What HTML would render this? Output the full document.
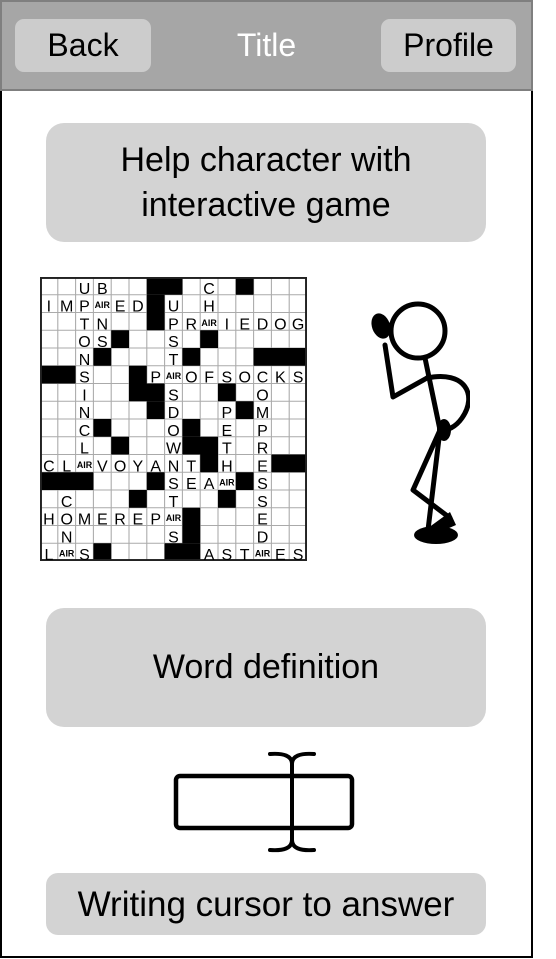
<!DOCTYPE html>
<html><head><meta charset="utf-8"><style>
*{margin:0;padding:0;box-sizing:border-box}
body{width:556px;height:959px;background:#fff;position:relative;overflow:hidden;font-family:"Liberation Sans",sans-serif}
.frame{position:absolute;left:0;top:0;width:533px;height:958px;border:2px solid #000}
.hdr{position:absolute;left:0;top:0;width:533px;height:91px;background:#a6a6a6;border:2px solid #7f7f7f}
.hb{position:absolute;top:19px;height:53px;background:#cccccc;border-radius:9px;font-size:32px;color:#000;display:flex;align-items:center;justify-content:center}
.title{position:absolute;left:200px;width:133px;top:19px;height:53px;color:#fff;font-size:32px;display:flex;align-items:center;justify-content:center}
.box{position:absolute;left:46px;width:440px;background:#d3d3d3;border-radius:18px;display:flex;align-items:center;justify-content:center;text-align:center;font-size:34px;color:#000;line-height:45px}
</style></head><body>
<div class="frame"></div>
<div class="hdr"></div>
<div class="hb" style="left:15px;width:136px">Back</div>
<div class="title">Title</div>
<div class="hb" style="left:381px;width:135px">Profile</div>

<div class="box" style="top:123px;height:119px">Help character with<br>interactive game</div>

<svg style="position:absolute;left:40px;top:277px" width="267" height="284" viewBox="0 0 15 16" preserveAspectRatio="none">
<rect x="0" y="0" width="15" height="16" fill="#fff"/>
<g stroke="#aaa" stroke-width="0.06">
<path d="M1 0V16M2 0V16M3 0V16M4 0V16M5 0V16M6 0V16M7 0V16M8 0V16M9 0V16M10 0V16M11 0V16M12 0V16M13 0V16M14 0V16"/>
<path d="M0 1H15M0 2H15M0 3H15M0 4H15M0 5H15M0 6H15M0 7H15M0 8H15M0 9H15M0 10H15M0 11H15M0 12H15M0 13H15M0 14H15M0 15H15"/>
</g>
<g fill="#000">
<rect x="6" y="0" width="2" height="1"/><rect x="11" y="0" width="1" height="1"/>
<rect x="6" y="1" width="1" height="2"/>
<rect x="4" y="3" width="1" height="1"/><rect x="9" y="3" width="1" height="1"/>
<rect x="3" y="4" width="1" height="1"/><rect x="8" y="4" width="1" height="1"/><rect x="12" y="4" width="3" height="1"/>
<rect x="0" y="5" width="2" height="1"/><rect x="5" y="5" width="1" height="1"/>
<rect x="5" y="6" width="2" height="1"/><rect x="10" y="6" width="1" height="1"/>
<rect x="6" y="7" width="1" height="1"/><rect x="11" y="7" width="1" height="1"/>
<rect x="3" y="8" width="1" height="1"/><rect x="8" y="8" width="1" height="1"/>
<rect x="4" y="9" width="1" height="1"/><rect x="8" y="9" width="2" height="1"/>
<rect x="9" y="10" width="1" height="1"/><rect x="13" y="10" width="2" height="1"/>
<rect x="0" y="11" width="3" height="1"/><rect x="6" y="11" width="1" height="1"/><rect x="11" y="11" width="1" height="1"/>
<rect x="5" y="12" width="1" height="1"/><rect x="10" y="12" width="1" height="1"/>
<rect x="8" y="13" width="1" height="2"/>
<rect x="3" y="15" width="1" height="1"/><rect x="7" y="15" width="2" height="1"/>
</g>
<rect x="0.05" y="0.05" width="14.9" height="15.9" fill="none" stroke="#222" stroke-width="0.12"/>
<g font-family="Liberation Sans,sans-serif" font-size="0.9" text-anchor="middle" fill="#000">
<text x="2.5" y="0.95">U</text><text x="3.5" y="0.95">B</text><text x="9.5" y="0.95">C</text>
<text x="0.5" y="1.95">I</text><text x="1.5" y="1.95">M</text><text x="2.5" y="1.95">P</text><text x="4.5" y="1.95">E</text><text x="5.5" y="1.95">D</text><text x="7.5" y="1.95">U</text><text x="9.5" y="1.95">H</text>
<text x="2.5" y="2.95">T</text><text x="3.5" y="2.95">N</text><text x="7.5" y="2.95">P</text><text x="8.5" y="2.95">R</text><text x="10.5" y="2.95">I</text><text x="11.5" y="2.95">E</text><text x="12.5" y="2.95">D</text><text x="13.5" y="2.95">O</text><text x="14.5" y="2.95">G</text>
<text x="2.5" y="3.95">O</text><text x="3.5" y="3.95">S</text><text x="7.5" y="3.95">S</text>
<text x="2.5" y="4.95">N</text><text x="7.5" y="4.95">T</text>
<text x="2.5" y="5.95">S</text><text x="6.5" y="5.95">P</text><text x="8.5" y="5.95">O</text><text x="9.5" y="5.95">F</text><text x="10.5" y="5.95">S</text><text x="11.5" y="5.95">O</text><text x="12.5" y="5.95">C</text><text x="13.5" y="5.95">K</text><text x="14.5" y="5.95">S</text>
<text x="2.5" y="6.95">I</text><text x="7.5" y="6.95">S</text><text x="12.5" y="6.95">O</text>
<text x="2.5" y="7.95">N</text><text x="7.5" y="7.95">D</text><text x="10.5" y="7.95">P</text><text x="12.5" y="7.95">M</text>
<text x="2.5" y="8.95">C</text><text x="7.5" y="8.95">O</text><text x="10.5" y="8.95">E</text><text x="12.5" y="8.95">P</text>
<text x="2.5" y="9.95">L</text><text x="7.5" y="9.95">W</text><text x="10.5" y="9.95">T</text><text x="12.5" y="9.95">R</text>
<text x="0.5" y="10.95">C</text><text x="1.5" y="10.95">L</text><text x="3.5" y="10.95">V</text><text x="4.5" y="10.95">O</text><text x="5.5" y="10.95">Y</text><text x="6.5" y="10.95">A</text><text x="7.5" y="10.95">N</text><text x="8.5" y="10.95">T</text><text x="10.5" y="10.95">H</text><text x="12.5" y="10.95">E</text>
<text x="7.5" y="11.95">S</text><text x="8.5" y="11.95">E</text><text x="9.5" y="11.95">A</text><text x="12.5" y="11.95">S</text>
<text x="1.5" y="12.95">C</text><text x="7.5" y="12.95">T</text><text x="12.5" y="12.95">S</text>
<text x="0.5" y="13.95">H</text><text x="1.5" y="13.95">O</text><text x="2.5" y="13.95">M</text><text x="3.5" y="13.95">E</text><text x="4.5" y="13.95">R</text><text x="5.5" y="13.95">E</text><text x="6.5" y="13.95">P</text><text x="12.5" y="13.95">E</text>
<text x="1.5" y="14.95">N</text><text x="7.5" y="14.95">S</text><text x="12.5" y="14.95">D</text>
<text x="0.5" y="15.95">L</text><text x="2.5" y="15.95">S</text><text x="9.5" y="15.95">A</text><text x="10.5" y="15.95">S</text><text x="11.5" y="15.95">T</text><text x="13.5" y="15.95">E</text><text x="14.5" y="15.95">S</text>
</g>
<g font-family="Liberation Sans,sans-serif" font-size="0.5" font-weight="bold" text-anchor="middle" fill="#000">
<text x="3.5" y="1.75">AIR</text><text x="9.5" y="2.75">AIR</text><text x="7.5" y="5.75">AIR</text><text x="2.5" y="10.75">AIR</text><text x="10.5" y="11.75">AIR</text><text x="7.5" y="13.75">AIR</text><text x="1.5" y="15.75">AIR</text><text x="12.5" y="15.75">AIR</text>
</g>
</svg>

<svg style="position:absolute;left:360px;top:290px" width="110" height="260" viewBox="360 290 110 260">
<g fill="none" stroke="#000" stroke-width="5" stroke-linecap="round" stroke-linejoin="round">
<circle cx="418" cy="331" r="27"/>
<path d="M385 345 L393 397 L427 378"/>
<path d="M425 358 L440 430"/>
<path d="M427 378 C465 370 478 395 462 418 C455 428 447 430 443 430"/>
<path d="M440 430 L413 490 L450 518"/>
<path d="M440 430 L428 530"/>
</g>
<ellipse cx="381" cy="326" rx="9" ry="13" fill="#000" transform="rotate(-20 381 326)"/>
<ellipse cx="444" cy="430" rx="7" ry="11" fill="#000"/>
<ellipse cx="436" cy="535" rx="22" ry="9" fill="#000"/>
<path d="M428 528 L450 512 L456 525 L440 532 Z" fill="#000"/>
</svg>

<div class="box" style="top:608px;height:119px">Word definition</div>

<svg style="position:absolute;left:160px;top:740px" width="220" height="120" viewBox="160 740 220 120">
<rect x="176" y="776" width="176" height="52" rx="4" fill="none" stroke="#000" stroke-width="4.5"/>
<g fill="none" stroke="#000" stroke-width="4" stroke-linecap="round">
<path d="M292 762 V842"/>
<path d="M270 754 C284 753 292 756 292 764 C292 756 300 753 314 754"/>
<path d="M270 850 C284 851 292 848 292 840 C292 848 300 851 314 850"/>
</g>
</svg>

<div class="box" style="top:873px;height:62px;border-radius:12px;font-size:35px">Writing cursor to answer</div>
</body></html>
